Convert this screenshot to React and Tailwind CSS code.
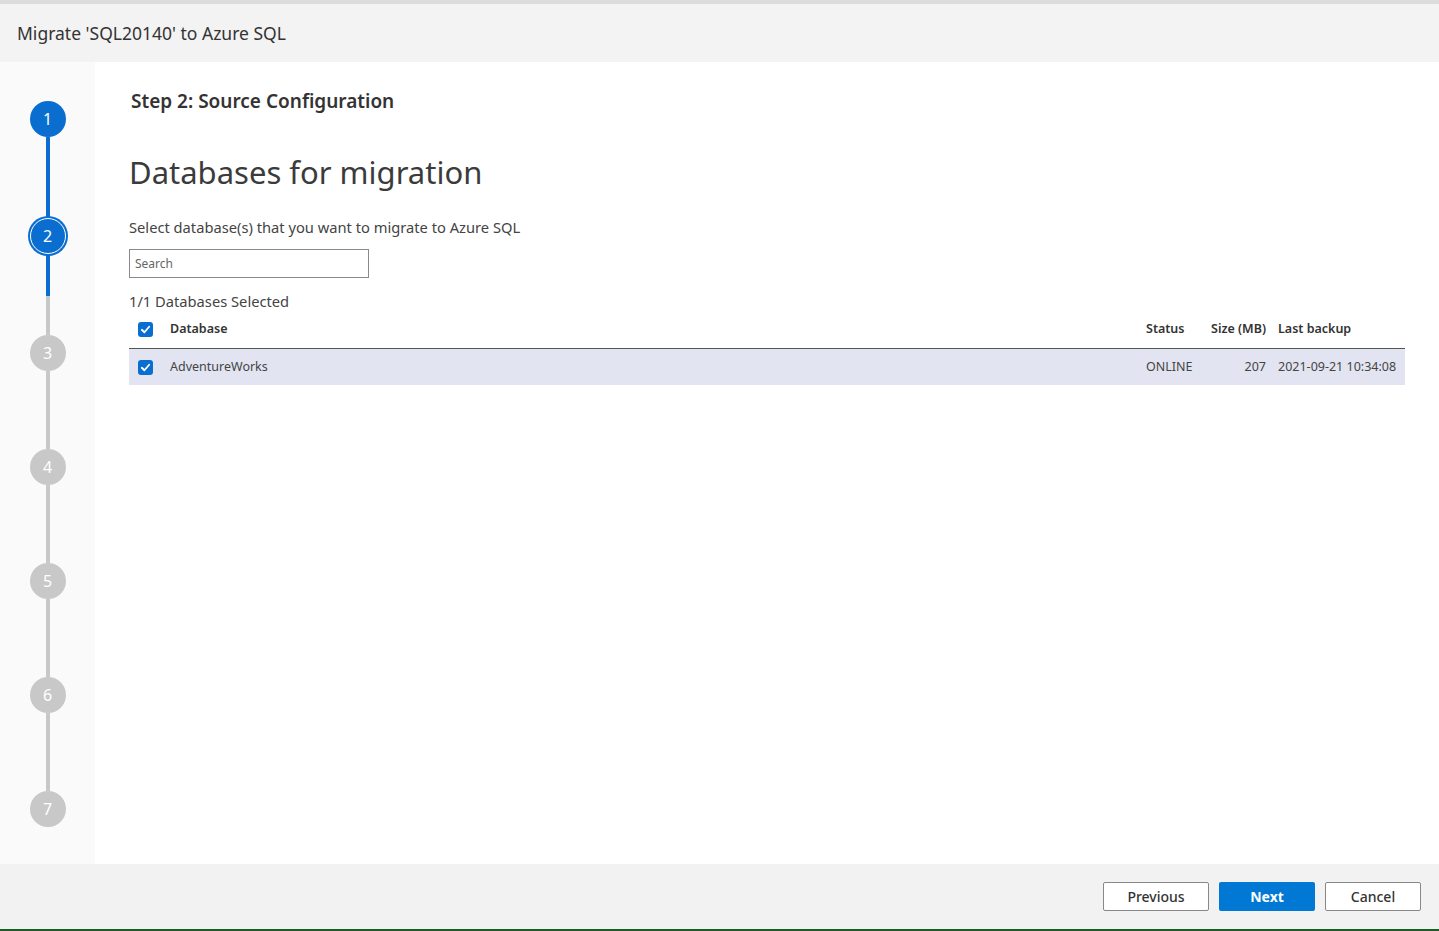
import React from "react";

function Step({ n, state }) {
  if (state === "done") {
    return (
      <div className="w-[36px] h-[36px] rounded-full bg-[#0a6ed1] flex items-center justify-center text-white text-[16px] shrink-0">
        {n}
      </div>
    );
  }
  if (state === "current") {
    return (
      <div className="w-[36px] h-[36px] rounded-full bg-[#0a6ed1] border border-white shadow-[0_0_0_2px_#0a6ed1] flex items-center justify-center text-white text-[16px] shrink-0">
        {n}
      </div>
    );
  }
  return (
    <div className="w-[36px] h-[36px] rounded-full bg-[#c8c8c8] flex items-center justify-center text-white text-[16px] shrink-0">
      {n}
    </div>
  );
}

function Check() {
  return (
    <div className="w-[15px] h-[15px] rounded-[3px] bg-[#0a6ed1] flex items-center justify-center">
      <svg width="11" height="11" viewBox="0 0 12 12">
        <path d="M2 6.3 L4.8 9 L10 3" fill="none" stroke="white" strokeWidth="2" strokeLinecap="round" strokeLinejoin="round" />
      </svg>
    </div>
  );
}

export default function App() {
  return (
    <div
      className="w-[1439px] h-[931px] flex flex-col bg-white text-[#333]"
      style={{ fontFamily: '"Noto Sans", "Open Sans", sans-serif' }}
    >
      <div className="h-[4px] bg-[#dcdcdc]" />
      <div className="h-[58px] bg-[#f3f3f3] flex items-center pl-[17px]">
        <span className="text-[17.5px] text-[#333]">Migrate 'SQL20140' to Azure SQL</span>
      </div>
      <div className="flex flex-1 min-h-0">
        <div className="w-[95px] bg-[#fafafa] flex flex-col items-center pt-[39px]">
          <Step n={1} state="done" />
          <div className="w-[4px] h-[81px] bg-[#0a6ed1]" />
          <Step n={2} state="current" />
          <div className="w-[4px] h-[81px] flex flex-col">
            <div className="h-[42px] bg-[#0a6ed1]" />
            <div className="flex-1 bg-[#c8c8c8]" />
          </div>
          <Step n={3} />
          <div className="w-[4px] h-[78px] bg-[#c8c8c8]" />
          <Step n={4} />
          <div className="w-[4px] h-[78px] bg-[#c8c8c8]" />
          <Step n={5} />
          <div className="w-[4px] h-[78px] bg-[#c8c8c8]" />
          <Step n={6} />
          <div className="w-[4px] h-[78px] bg-[#c8c8c8]" />
          <Step n={7} />
        </div>
        <div className="flex-1 pl-[34px] pr-[34px] pt-[26px]">
          <div className="text-[19px] font-semibold leading-[26px] pl-[2px] text-[#333]">Step 2: Source Configuration</div>
          <div className="mt-[37px] text-[31px] leading-[42px] text-[#3b3b3b]">Databases for migration</div>
          <div className="mt-[24px] text-[14.7px] leading-[20px] text-[#444]">Select database(s) that you want to migrate to Azure SQL</div>
          <div className="mt-[12px] w-[240px] h-[29px] border border-[#8a8a8a] flex items-center px-[5px] text-[12px] text-[#666]">
            Search
          </div>
          <div className="mt-[13px] text-[14.7px] leading-[20px] text-[#444]">1/1 Databases Selected</div>
          <div className="w-[1276px]">
            <div className="h-[38px] flex items-center border-b border-[#555] text-[12.5px] font-semibold text-[#333]">
              <div className="w-[41px] flex pl-[9px]"><Check /></div>
              <div className="flex-1">Database</div>
              <div className="w-[60px]">Status</div>
              <div className="w-[60px] text-right whitespace-nowrap">Size (MB)</div>
              <div className="w-[139px] pl-[12px] whitespace-nowrap">Last backup</div>
            </div>
            <div className="h-[36px] flex items-center bg-[#e2e5f1] text-[12.5px] text-[#444]">
              <div className="w-[41px] flex pl-[9px]"><Check /></div>
              <div className="flex-1">AdventureWorks</div>
              <div className="w-[60px]">ONLINE</div>
              <div className="w-[60px] text-right">207</div>
              <div className="w-[139px] pl-[12px] whitespace-nowrap">2021-09-21 10:34:08</div>
            </div>
          </div>
        </div>
      </div>
      <div className="h-[65px] bg-[#f2f2f2] flex items-center justify-end pr-[18px] gap-[10px] shrink-0">
        <button className="w-[106px] h-[29px] border border-[#8a8886] rounded-[2px] bg-white text-[14px] font-medium text-[#333]">Previous</button>
        <button className="w-[96px] h-[29px] rounded-[2px] bg-[#0078d4] text-[14px] font-bold text-white">Next</button>
        <button className="w-[96px] h-[29px] border border-[#8a8886] rounded-[2px] bg-white text-[14px] font-medium text-[#333]">Cancel</button>
      </div>
      <div className="h-[2px] bg-[#1e5a23] shrink-0" />
    </div>
  );
}
